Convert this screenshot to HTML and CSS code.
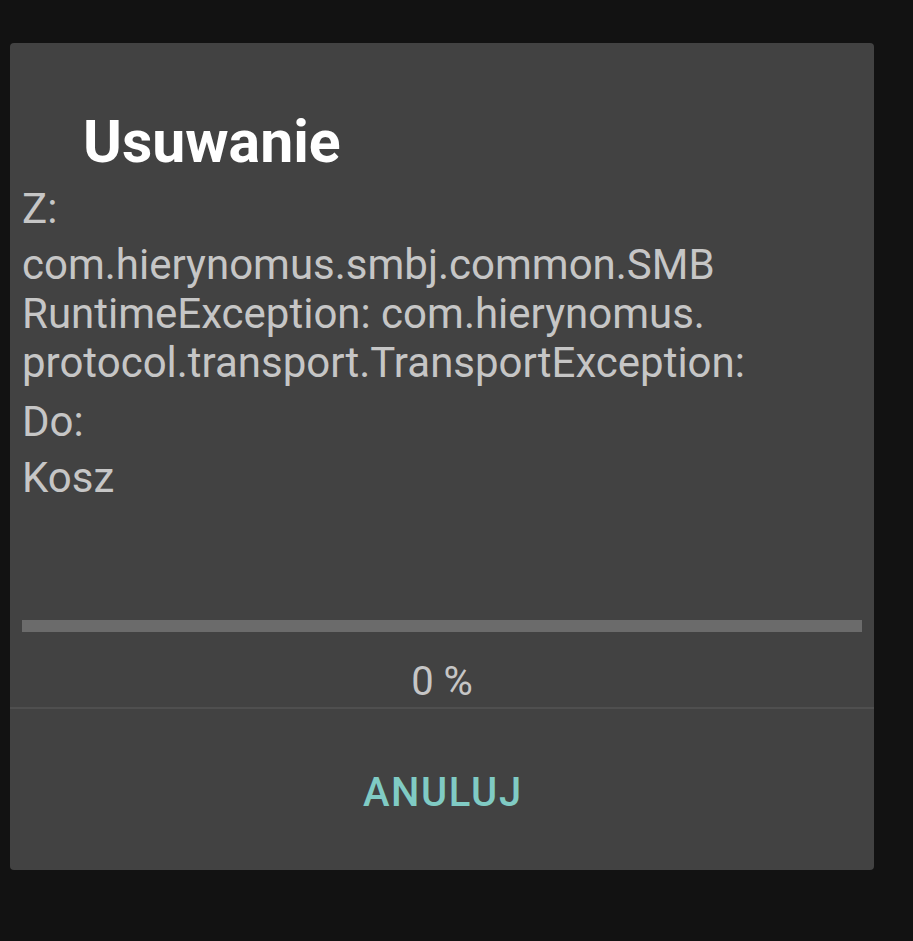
FILE: index.html
```html
<!DOCTYPE html>
<html lang="pl">
<head>
<meta charset="utf-8">
<title>Usuwanie</title>
<link rel="stylesheet" href="styles.css">
</head>
<body>
<div class="dialog">
  <h1 class="title">Usuwanie</h1>
  <div class="content">
    <div class="info">
      <p class="line">Z:</p>
      <p class="line">com.hierynomus.smbj.common.SMB<br>RuntimeException: com.hierynomus.<br>protocol.transport.TransportException:</p>
      <p class="line line-gap">Do:</p>
      <p class="line">Kosz</p>
    </div>
    <div class="progress"><div class="progress-fill" style="width:0%"></div></div>
    <div class="percent">0 %</div>
  </div>
  <div class="divider"></div>
  <div class="actions">
    <button class="btn">ANULUJ</button>
  </div>
</div>
</body>
</html>
```

FILE: styles.css
```css
html, body {
  margin: 0;
  padding: 0;
  background: #121212;
}
body {
  padding: 43px 39px 0 10px;
  font-family: Roboto, "Noto Sans", sans-serif;
}
.dialog {
  background: #424242;
  border-radius: 4px;
  height: 827px;
  display: flex;
  flex-direction: column;
  overflow: hidden;
}
.title {
  margin: 65px 0 0 73px;
  font-size: 59px;
  font-weight: 700;
  line-height: 67px;
  color: #ffffff;
}
.content {
  padding: 9px 12px 0 12px;
}
.info {
  display: flex;
  flex-direction: column;
  gap: 7px;
}
.line {
  margin: 0;
  font-size: 42px;
  line-height: 49px;
  color: #c6c6c6;
}
.line-gap {
  margin-top: 3px;
}
.progress {
  margin-top: 118px;
  height: 12px;
  background: #6b6b6b;
}
.progress-fill {
  height: 100%;
  background: #80cbc4;
}
.percent {
  margin-top: 27px;
  text-align: center;
  font-size: 40px;
  line-height: 46px;
  color: #c6c6c6;
}
.divider {
  margin-top: 2px;
  height: 2px;
  background: #4f4f4f;
}
.actions {
  display: flex;
  justify-content: center;
  margin-top: 61px;
}
.btn {
  background: none;
  border: none;
  padding: 0 0 0 1.6px;
  font-family: Roboto, "Noto Sans", sans-serif;
  font-size: 40px;
  font-weight: 500;
  letter-spacing: 1.6px;
  line-height: 46px;
  color: #80cbc4;
}
```
